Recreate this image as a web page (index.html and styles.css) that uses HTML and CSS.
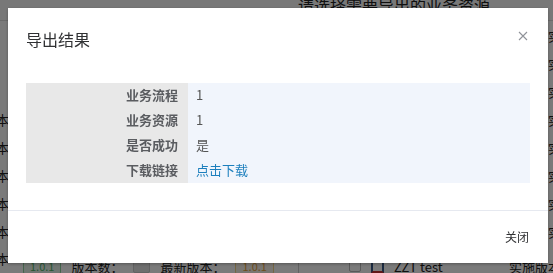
FILE: index.html
```html
<!DOCTYPE html>
<html lang="zh">
<head>
<meta charset="utf-8">
<link rel="stylesheet" href="styles.css">
</head>
<body>
<div class="page">
  <div class="page-head"><span class="page-title">请选择需要导出的业务资源</span></div>
  <div class="page-rows">
    <div class="prow"><span class="l"></span><span class="r">实</span></div>
    <div class="prow"><span class="l"></span><span class="r">实</span></div>
    <div class="prow"><span class="l"></span><span class="r">实</span></div>
    <div class="prow"><span class="l">本</span><span class="r">实</span></div>
    <div class="prow"><span class="l">本</span><span class="r">实</span></div>
    <div class="prow"><span class="l">本</span><span class="r">实</span></div>
    <div class="prow"><span class="l">本</span><span class="r">实</span></div>
    <div class="prow"><span class="l">本</span><span class="r">实</span></div>
    <div class="prow last">
      <span class="l">本</span>
      <div class="page-foot">
        <span class="pbtn green">1.0.1</span>
        <span class="ptext">版本数：</span>
        <span class="pbox"></span>
        <span class="ptext wide">最新版本：</span>
        <span class="pbtn yellow">1.0.1</span>
        <span class="pdiv"></span>
        <span class="pcheck"></span>
        <span class="picon"></span>
        <span class="ptext">ZZT test</span>
        <span class="ptext end">实施版本</span>
      </div>
    </div>
  </div>
</div>

<div class="overlay">
  <div class="dialog">
    <div class="dialog-header">
      <span class="dialog-title">导出结果</span>
      <svg class="close" width="10" height="10" viewBox="0 0 10 10"><path d="M1 1L9 9M9 1L1 9" stroke="#909399" stroke-width="1.1" fill="none"/></svg>
    </div>
    <div class="dialog-body">
      <div class="result">
        <div class="k">业务流程</div><div class="v">1</div>
        <div class="k">业务资源</div><div class="v">1</div>
        <div class="k">是否成功</div><div class="v">是</div>
        <div class="k">下载链接</div><div class="v"><a class="link">点击下载</a></div>
      </div>
    </div>
    <div class="dialog-footer">
      <span class="btn-close">关闭</span>
    </div>
  </div>
</div>
</body>
</html>
```
FILE: styles.css
```css
* { box-sizing: border-box; }
html, body { margin: 0; padding: 0; }
body {
  width: 553px;
  height: 273px;
  overflow: hidden;
  font-family: "Noto Sans CJK SC", "Noto Sans", sans-serif;
  background: #fff;
  color: #333;
}
.page { width: 553px; height: 273px; display: flex; flex-direction: column; overflow: hidden; }
.page-head {
  height: 21px;
  flex: none;
  border-bottom: 1px solid #ddd;
  background: #fafafa;
  overflow: hidden;
}
.page-title {
  display: block;
  margin-left: 298px;
  margin-top: -7px;
  font-size: 16px;
  line-height: 24px;
  color: #222;
}
.page-rows { display: flex; flex-direction: column; }
.prow {
  height: 28px;
  flex: none;
  display: flex;
  justify-content: space-between;
  align-items: center;
  font-size: 13px;
  color: #222;
}
.prow .l { margin-left: -4px; }
.prow .r { margin-right: -8px; }
.prow.last { height: 30px; align-items: flex-start; }
.prow.last .l { margin-top: 4px; }
.page-foot {
  flex: 1;
  display: flex;
  align-items: center;
  height: 22px;
  margin-top: 10px;
  font-size: 13px;
  color: #222;
  gap: 10px;
  padding-left: 14px;
  margin-right: -8px;
}
.pbtn { border: 1px solid; border-radius: 3px; padding: 0 6px; font-size: 11px; line-height: 16px; }
.green { border-color: #8fd19e; color: #52b36a; background: #eaf7ec; }
.yellow { border-color: #f5d68a; color: #e6a23c; background: #fdf6ec; }
.pbox { width: 17px; height: 14px; background: #e5e5e5; border: 1px solid #ccc; border-radius: 2px; }
.pdiv { width: 1px; height: 22px; background: #ccc; margin-left: 14px; }
.pcheck { width: 12px; height: 12px; border: 1px solid #bbb; border-radius: 2px; margin-left: 40px; }
.picon { width: 13px; height: 14px; border: 2px solid #3a5a8a; border-bottom-color: #c33; }
.end { margin-left: auto; }

.overlay {
  position: fixed;
  inset: 0;
  background: rgba(0, 0, 0, 0.52);
  padding: 8px 0 0 8px;
}
.dialog {
  width: 540px;
  height: 255px;
  background: #fff;
  box-shadow: 0 1px 3px rgba(0,0,0,0.3);
  display: flex;
  flex-direction: column;
}
.dialog-header {
  display: flex;
  justify-content: space-between;
  align-items: flex-start;
  padding: 19px 20px 0 18px;
  height: 75px;
}
.dialog-title {
  font-size: 16px;
  line-height: 24px;
  color: #303133;
}
.close { margin-top: 4px; }
.dialog-body { padding: 0 18px; }
.result {
  display: grid;
  grid-template-columns: 162px 1fr;
  grid-auto-rows: 25px;
  font-size: 13px;
}
.k {
  background: #e8e8e8;
  text-align: right;
  padding-right: 10px;
  font-weight: bold;
  color: #5a5c60;
  line-height: 23px;
}
.v {
  background: #f1f5fc;
  padding-left: 8px;
  color: #555;
  line-height: 23px;
}
.link { color: #1c7fbd; cursor: pointer; }
.dialog-footer {
  margin-top: 27px;
  border-top: 1px solid #e6e9f0;
  flex: 1;
  display: flex;
  justify-content: flex-end;
  align-items: center;
  padding: 0 19px 2px 0;
}
.btn-close { font-size: 12px; color: #303133; }
```
